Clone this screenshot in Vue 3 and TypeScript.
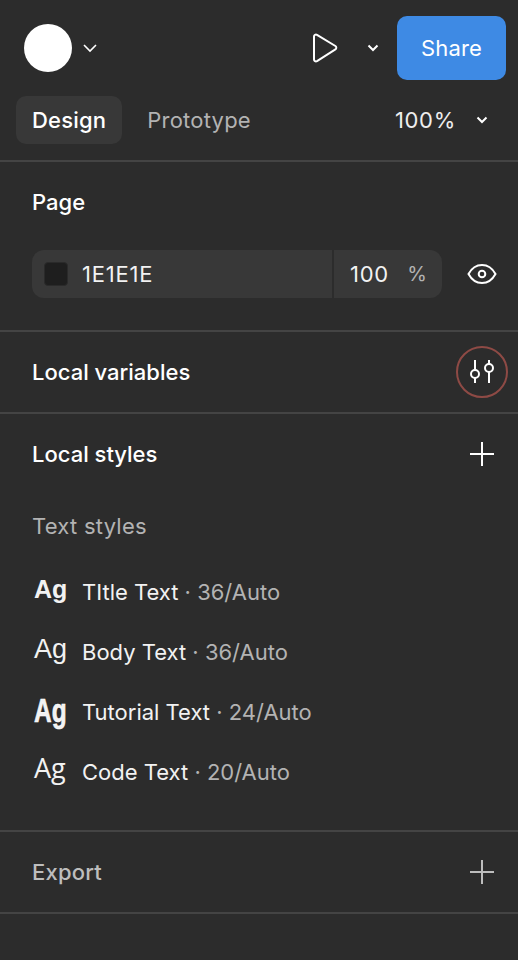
<script setup lang="ts">
interface TextStyle {
  name: string
  meta: string
  glyphClass: string
}

const textStyles: TextStyle[] = [
  { name: 'TItle Text', meta: '36/Auto', glyphClass: 'ag-title' },
  { name: 'Body Text', meta: '36/Auto', glyphClass: 'ag-body' },
  { name: 'Tutorial Text', meta: '24/Auto', glyphClass: 'ag-tutorial' },
  { name: 'Code Text', meta: '20/Auto', glyphClass: 'ag-code' },
]
</script>

<template>
  <div class="panel">
    <header class="top">
      <div class="bar">
        <div class="avatar"></div>
        <svg class="chev chev-avatar" width="14" height="10" viewBox="0 0 14 10" fill="none">
          <path d="M1 2l6 6 6-6" stroke="#fff" stroke-width="1.6" />
        </svg>
        <svg class="play" width="26" height="30" viewBox="0 0 26 30" fill="none">
          <path d="M2 3.6C2 2 3.6 1.1 5 1.900L23.400 13c1.200.8 1.200 2.600 0 3.300L5 28.100c-1.400.8-3-.2-3-1.700z" stroke="#fff" stroke-width="2" stroke-linejoin="round" />
        </svg>
        <svg class="chev chev-play" width="12" height="8" viewBox="0 0 12 8" fill="none">
          <path d="M1.500 1.500L6 6l4.500-4.500" stroke="#fff" stroke-width="2" />
        </svg>
        <button class="share">Share</button>
      </div>
      <div class="tabs">
        <span class="tab active">Design</span>
        <span class="tab">Prototype</span>
        <span class="zoom">100%</span>
        <svg class="chev chev-zoom" width="12" height="8" viewBox="0 0 12 8" fill="none">
          <path d="M1.500 1.500L6 6l4.500-4.500" stroke="#fff" stroke-width="2" />
        </svg>
      </div>
    </header>

    <section class="page">
      <h2 class="title">Page</h2>
      <div class="fill-row">
        <div class="fill">
          <div class="fill-color">
            <span class="swatch"></span>
            <span class="hex">1E1E1E</span>
          </div>
          <div class="fill-opacity">
            <span class="num">100</span>
            <span class="pct">%</span>
          </div>
        </div>
        <svg class="eye" width="30" height="22" viewBox="0 0 30 22" fill="none">
          <path d="M1.500 11C4.500 5.500 9.200 2 15 2s10.500 3.500 13.500 9c-3 5.500-7.700 9-13.500 9S4.500 16.500 1.500 11z" stroke="#fff" stroke-width="2" />
          <circle cx="15" cy="11" r="3.300" stroke="#fff" stroke-width="2" />
        </svg>
      </div>
    </section>

    <section class="variables">
      <h2 class="title">Local variables</h2>
      <div class="ring">
        <svg width="26" height="24" viewBox="0 0 26 24" fill="none" stroke="#fff" stroke-width="2">
          <path d="M6 0v10M6 18v5M20 0v4M20 12v11" />
          <circle cx="6" cy="14" r="4" />
          <circle cx="20" cy="8" r="4" />
        </svg>
      </div>
    </section>

    <section class="styles">
      <div class="head">
        <h2 class="title">Local styles</h2>
        <svg class="plus" width="24" height="24" viewBox="0 0 24 24" stroke="#fff" stroke-width="2">
          <path d="M12 0v24M0 12h24" />
        </svg>
      </div>
      <div class="sub">Text styles</div>
      <ul class="list">
        <li v-for="s in textStyles" :key="s.name" class="item">
          <span class="ag" :class="s.glyphClass">Ag</span>
          <span class="name">{{ s.name }}</span>
          <span class="meta">&nbsp;· {{ s.meta }}</span>
        </li>
      </ul>
    </section>

    <section class="export">
      <h2 class="title muted">Export</h2>
      <svg class="plus" width="24" height="24" viewBox="0 0 24 24" stroke="#bdbdbd" stroke-width="2">
        <path d="M12 0v24M0 12h24" />
      </svg>
    </section>
  </div>
</template>

<style>
html,
body {
  margin: 0;
  background: #2c2c2c;
}
</style>

<style scoped>
.panel {
  width: 518px;
  height: 960px;
  background: #2c2c2c;
  color: #fff;
  font-family: Inter, "Liberation Sans", sans-serif;
  font-size: 22px;
  overflow: hidden;
}
.top {
  height: 160px;
  border-bottom: 2px solid #444;
}
.bar {
  height: 64px;
  padding: 16px 12px 0 24px;
  display: flex;
  align-items: center;
}
.avatar {
  width: 48px;
  height: 48px;
  border-radius: 50%;
  background: #fff;
}
.chev {
  display: block;
  flex: none;
}
.chev-avatar {
  margin-left: 11px;
}
.play {
  margin-left: 215px;
}
.chev-play {
  margin-left: 29px;
}
.share {
  margin-left: 18px;
  width: 109px;
  height: 64px;
  border: 0;
  border-radius: 10px;
  background: #3e8ae4;
  color: #fff;
  font: 400 22px Inter, "Liberation Sans", sans-serif;
  letter-spacing: 0.2px;
}
.tabs {
  margin-top: 16px;
  height: 48px;
  padding-left: 16px;
  display: flex;
  align-items: center;
}
.tab {
  height: 48px;
  line-height: 48px;
  padding: 0 16px;
  border-radius: 10px;
  color: #b3b3b3;
  margin-right: 9px;
  font-weight: 400;
  letter-spacing: 0.22px;
}
.tab.active {
  background: #383838;
  color: #fff;
  font-weight: 500;
  letter-spacing: 0.2px;
}
.zoom {
  margin-left: auto;
  color: #eee;
  letter-spacing: 0.7px;
}
.chev-zoom {
  margin: 0 30px 0 20px;
}
.title {
  margin: 0;
  font-size: 22px;
  font-weight: 500;
  line-height: 28px;
}
.muted {
  color: #bdbdbd;
  letter-spacing: 0.2px;
}
.page {
  height: 168px;
  box-sizing: border-box;
  padding: 26px 0 0 32px;
}
.fill-row {
  margin-top: 34px;
  display: flex;
  align-items: center;
}
.fill {
  width: 410px;
  height: 48px;
  border-radius: 12px;
  background: #383838;
  display: flex;
  align-items: center;
}
.fill-color {
  width: 302px;
  height: 48px;
  box-sizing: border-box;
  padding-left: 12px;
  display: flex;
  align-items: center;
  gap: 14px;
  border-right: 2px solid #2c2c2c;
  color: #f2f2f2;
}
.hex {
  letter-spacing: 0.8px;
}
.swatch {
  width: 24px;
  height: 24px;
  box-sizing: border-box;
  border-radius: 4px;
  background: #1e1e1e;
  border: 1px solid #2a2a2a;
}
.fill-opacity {
  flex: 1;
  padding: 0 15px 0 16px;
  display: flex;
  justify-content: space-between;
  align-items: center;
  color: #f2f2f2;
}
.num {
  letter-spacing: 0.7px;
}
.pct {
  color: #b3b3b3;
  font-size: 20px;
}
.eye {
  margin-left: 25px;
}
.variables {
  height: 82px;
  box-sizing: border-box;
  border-top: 2px solid #444;
  padding: 0 10px 0 32px;
  display: flex;
  align-items: center;
  justify-content: space-between;
}
.ring {
  width: 52px;
  height: 52px;
  box-sizing: border-box;
  border: 2px solid #8e4a45;
  border-radius: 50%;
  display: flex;
  align-items: center;
  justify-content: center;
}
.styles {
  height: 418px;
  box-sizing: border-box;
  border-top: 2px solid #444;
  padding: 26px 24px 0 32px;
}
.head {
  display: flex;
  align-items: center;
  justify-content: space-between;
}
.plus {
  display: block;
}
.sub {
  margin-top: 44px;
  line-height: 28px;
  color: #b3b3b3;
  letter-spacing: 0.25px;
}
.list {
  list-style: none;
  margin: 22px 0 0;
  padding: 0;
}
.item {
  height: 60px;
  display: flex;
  align-items: center;
  color: #f2f2f2;
}
.ag {
  width: 50px;
  box-sizing: border-box;
  padding-left: 2px;
  flex: none;
  line-height: 36px;
  position: relative;
  font-family: "Liberation Sans", sans-serif;
}
.ag-title {
  font-size: 25px;
  font-weight: 700;
  top: -3px;
}
.ag-body {
  font-size: 27px;
  font-weight: 400;
  top: -3px;
}
.ag-tutorial {
  font-size: 33px;
  font-weight: 700;
  top: -1px;
  transform: scaleX(0.74);
  transform-origin: 2px center;
  -webkit-text-stroke: 0.6px #fff;
}
.ag-code {
  font-size: 27px;
  font-weight: 400;
  font-family: "Open Sans", sans-serif;
  top: -4px;
}
.meta {
  color: #b3b3b3;
}
.export {
  height: 84px;
  box-sizing: border-box;
  border-top: 2px solid #444;
  border-bottom: 2px solid #444;
  padding: 0 24px 0 32px;
  display: flex;
  align-items: center;
  justify-content: space-between;
}
</style>
